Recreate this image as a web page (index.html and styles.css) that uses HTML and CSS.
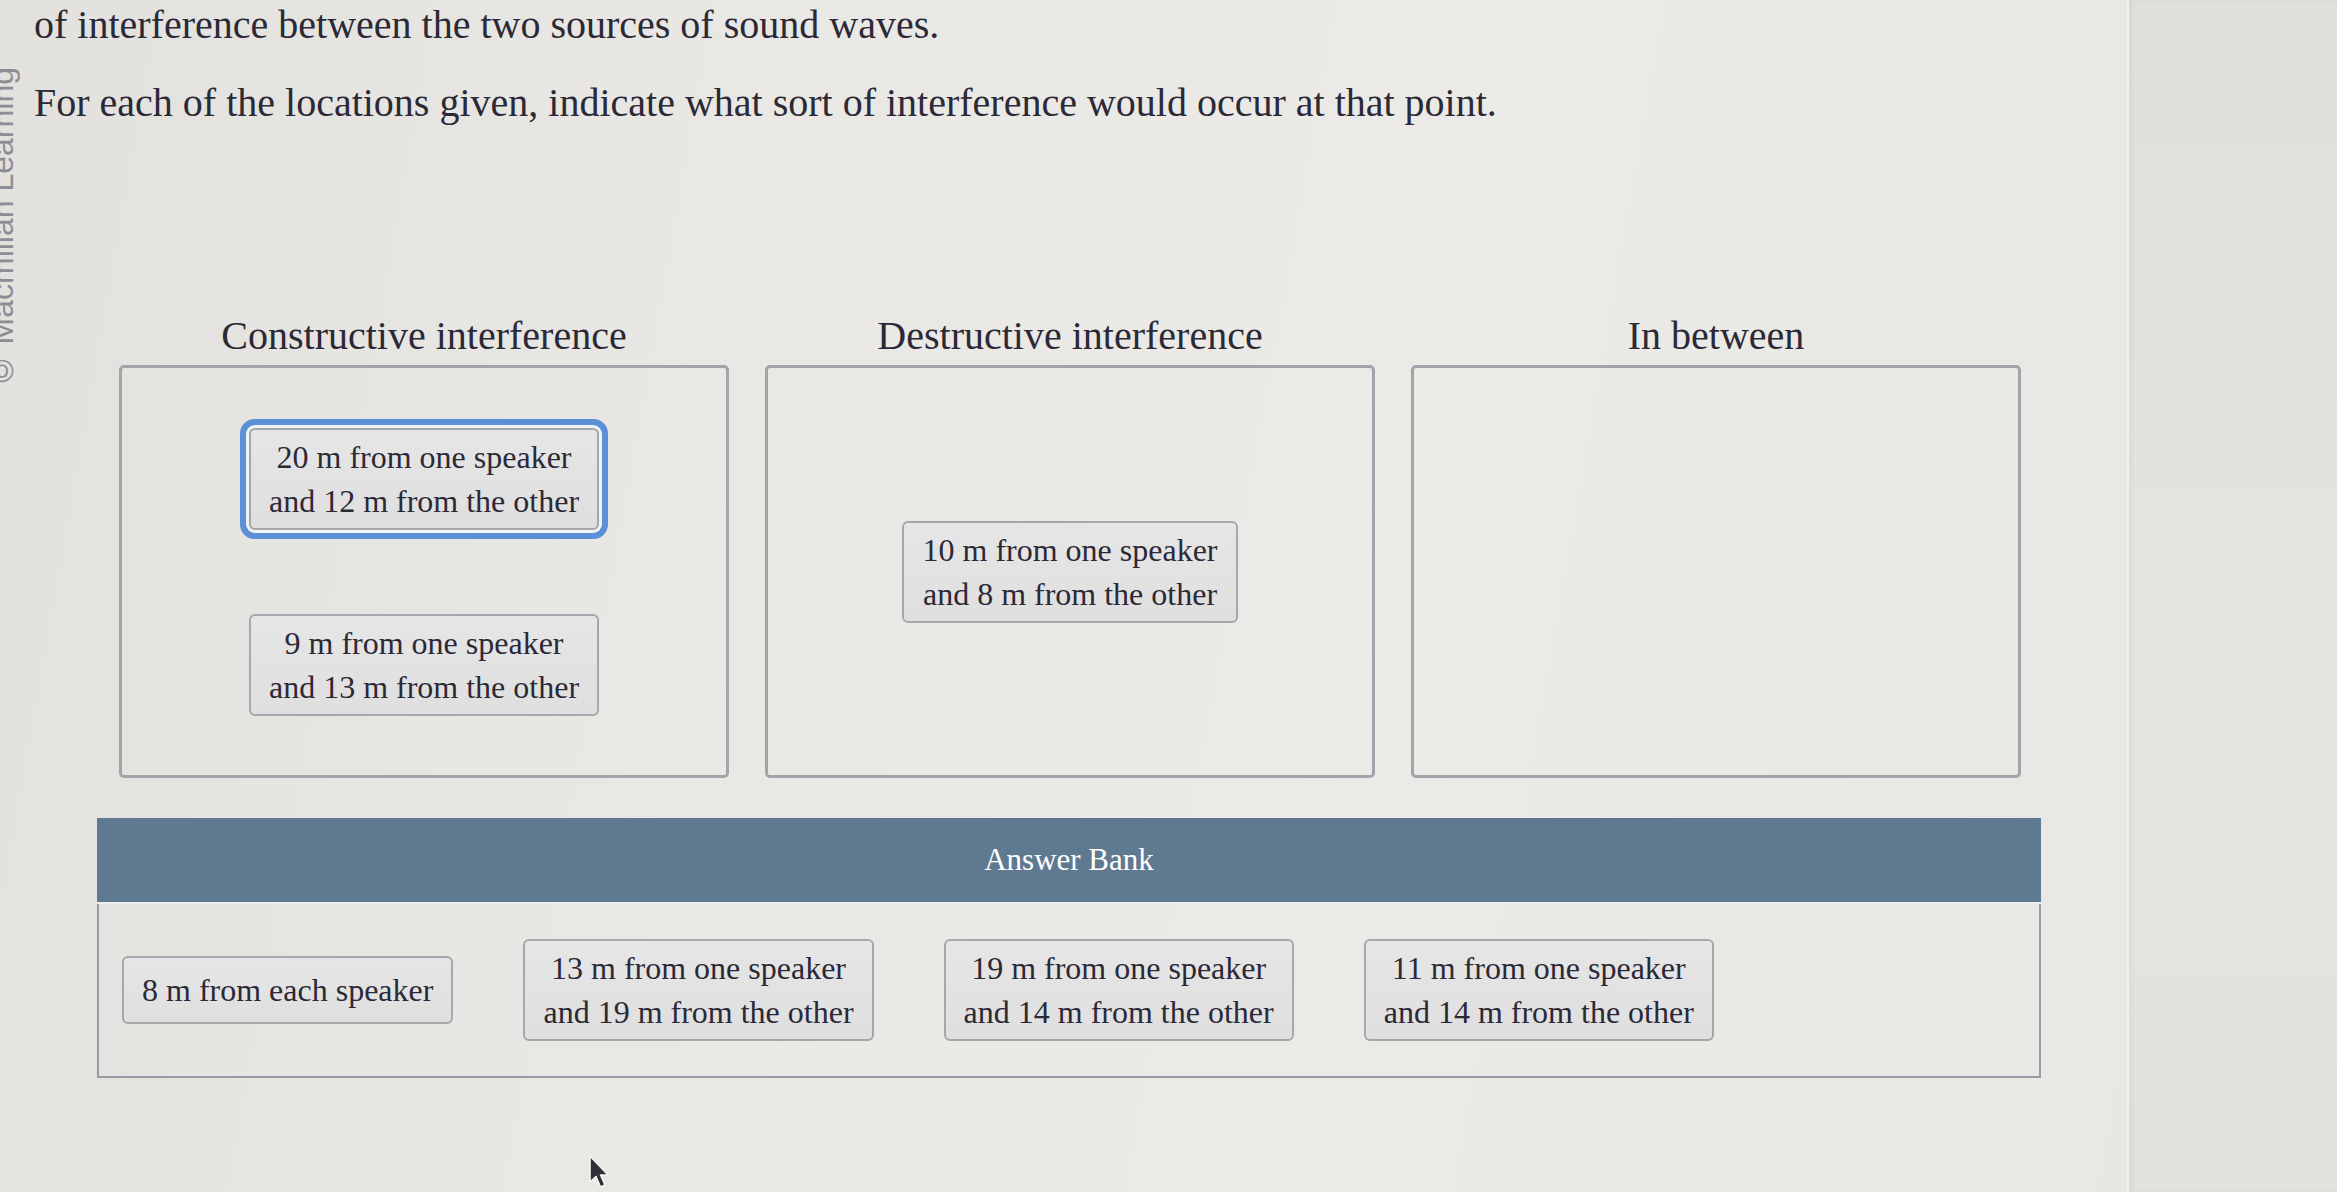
FILE: index.html
```html
<!DOCTYPE html>
<html lang="en">
<head>
<meta charset="utf-8">
<title>Interference sorting</title>
<link rel="stylesheet" href="styles.css">
</head>
<body>
<div class="screen">
  <div class="page">
    <aside class="gutter"><span class="credit">© Macmillan Learning</span></aside>
    <main class="content">
      <p class="prompt">of interference between the two sources of sound waves.</p>
      <p class="prompt prompt-next">For each of the locations given, indicate what sort of interference would occur at that point.</p>

      <section class="bins">
        <div class="bin">
          <h2 class="bin-title">Constructive interference</h2>
          <div class="bin-box">
            <div class="chip chip-selected"><span>20 m from one speaker<br>and 12 m from the other</span></div>
            <div class="chip"><span>9 m from one speaker<br>and 13 m from the other</span></div>
          </div>
        </div>
        <div class="bin">
          <h2 class="bin-title">Destructive interference</h2>
          <div class="bin-box">
            <div class="chip"><span>10 m from one speaker<br>and 8 m from the other</span></div>
          </div>
        </div>
        <div class="bin">
          <h2 class="bin-title">In between</h2>
          <div class="bin-box"></div>
        </div>
      </section>

      <section class="bank">
        <div class="bank-head">Answer Bank</div>
        <div class="bank-body">
          <div class="chip"><span>8 m from each speaker</span></div>
          <div class="chip"><span>13 m from one speaker<br>and 19 m from the other</span></div>
          <div class="chip"><span>19 m from one speaker<br>and 14 m from the other</span></div>
          <div class="chip"><span>11 m from one speaker<br>and 14 m from the other</span></div>
        </div>
      </section>
    </main>
  </div>
  <div class="side"></div>
</div>
<svg class="cursor" width="22" height="34" viewBox="0 0 22 34" aria-hidden="true">
  <path d="M2 1 L2 27 L8 21.5 L12.5 32 L17 30 L12.5 20 L20 20 Z" fill="#2f3036" stroke="#f4f4f4" stroke-width="1.6" stroke-linejoin="round"/>
</svg>
</body>
</html>
```

FILE: styles.css
```css
html, body {
  margin: 0;
  padding: 0;
}

body {
  width: 2337px;
  height: 1192px;
  overflow: hidden;
  position: relative;
  background: #e6e5e1;
  font-family: "Liberation Serif", "Times New Roman", serif;
  color: #2c2937;
}

.screen {
  display: flex;
  height: 1192px;
}

.page {
  flex: 0 0 2127px;
  display: flex;
  background: linear-gradient(100deg, #e2e1dd 0%, #e9e8e4 35%, #ebeae7 65%, #e8e7e3 100%);
}

.side {
  flex: 1;
  background: linear-gradient(180deg, #e0dfdb 0%, #e5e4e0 60%, #e2e1dd 100%);
  border-left: 2px solid #f1f0ed;
  box-shadow: inset 3px 0 4px rgba(0, 0, 0, 0.04);
}

/* left copyright strip */
.gutter {
  flex: 0 0 22px;
  overflow: hidden;
}

.credit {
  display: inline-block;
  margin-top: 67px;
  margin-left: -16px;
  writing-mode: vertical-rl;
  transform: rotate(180deg);
  font-family: "Liberation Sans", Arial, sans-serif;
  font-size: 32px;
  line-height: 37px;
  color: #8e8d94;
  white-space: nowrap;
}

.content {
  flex: 1;
  padding-left: 12px;
}

.prompt {
  margin: 0;
  font-size: 40px;
  line-height: 50px;
  white-space: nowrap;
}

.prompt-next {
  margin-top: 28px;
}

/* drop zones */
.bins {
  margin: 185px 0 0 85px;
  display: grid;
  grid-template-columns: repeat(3, 610px);
  column-gap: 36px;
}

.bin-title {
  margin: 0 0 7px;
  font-size: 40px;
  line-height: 45px;
  font-weight: normal;
  text-align: center;
}

.bin-box {
  box-sizing: border-box;
  height: 413px;
  border: 3px solid #a4a3aa;
  border-radius: 5px;
  display: flex;
  flex-direction: column;
  align-items: center;
  justify-content: center;
  gap: 84px;
}

/* draggable answer chips */
.chip {
  box-sizing: border-box;
  min-height: 68px;
  padding: 5px 18px;
  border: 2px solid #a7a6ae;
  border-radius: 6px;
  background: linear-gradient(180deg, #e6e6e6 0%, #dfdfdf 100%);
  display: flex;
  align-items: center;
  justify-content: center;
  text-align: center;
  font-size: 32px;
  line-height: 44px;
  white-space: nowrap;
}

.chip-selected {
  box-shadow: 0 0 0 3px #f3f3f5, 0 0 0 9px #5b8fd8;
}

/* answer bank */
.bank {
  margin: 40px 0 0 63px;
  width: 1944px;
}

.bank-head {
  height: 84px;
  background: #5f7991;
  border-bottom: 2px solid #eeeeee;
  color: #ffffff;
  font-size: 31px;
  display: flex;
  align-items: center;
  justify-content: center;
}

.bank-body {
  box-sizing: border-box;
  height: 174px;
  border: 2px solid #9a99a6;
  border-top: none;
  padding: 0 23px;
  display: flex;
  align-items: center;
  gap: 70px;
}

/* mouse pointer lying over the page */
.cursor {
  position: absolute;
  left: 588px;
  top: 1155px;
}
```
